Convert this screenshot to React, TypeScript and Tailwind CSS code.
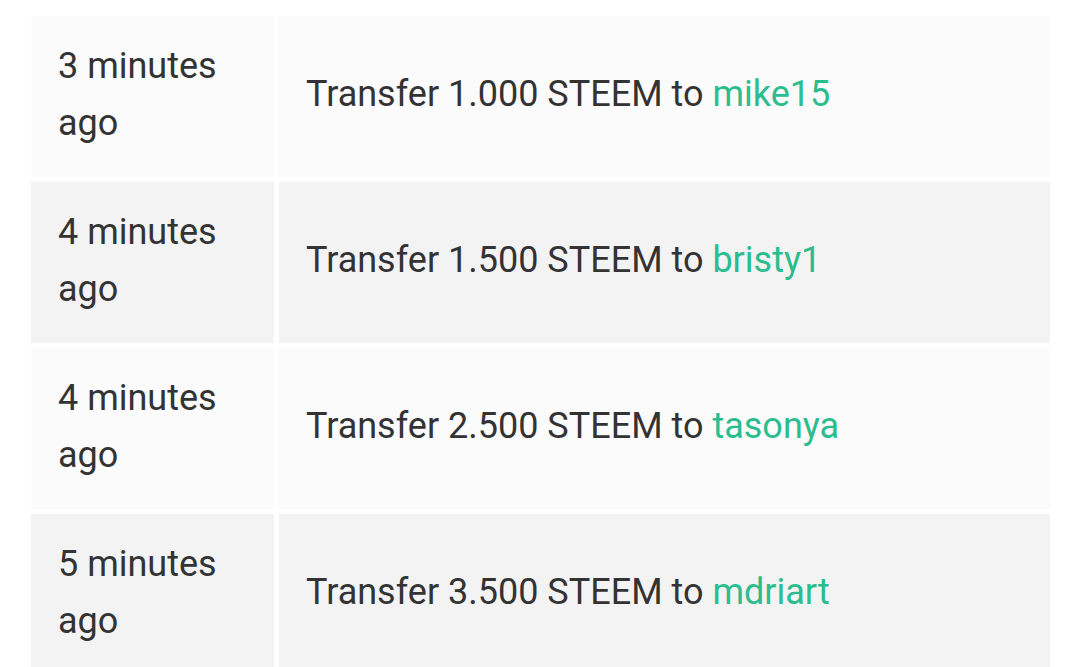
const transfers = [
  { time: "3 minutes ago", amount: "1.000", to: "mike15" },
  { time: "4 minutes ago", amount: "1.500", to: "bristy1" },
  { time: "4 minutes ago", amount: "2.500", to: "tasonya" },
  { time: "5 minutes ago", amount: "3.500", to: "mdriart" },
];

export default function App() {
  return (
    <div className="min-h-screen bg-white pt-4 pl-[31px] font-['Roboto',sans-serif] text-[36px] leading-[57px] text-[#333]">
      <div className="flex w-[1019px] flex-col gap-[5px]">
        {transfers.map((row, index) => {
          const bg = index % 2 === 0 ? "bg-[#fbfbfb]" : "bg-[#f3f3f3]";
          return (
            <div key={`${row.to}-${index}`} className="flex h-[161px] gap-[5px]">
              <div className={`flex w-[243px] shrink-0 items-center px-[27px] pb-[4px] ${bg}`}>
                <p className="w-[170px]">{row.time}</p>
              </div>
              <div className={`flex flex-1 items-center px-[27px] pb-[5px] ${bg}`}>
                <p>
                  Transfer {row.amount} STEEM to{" "}
                  <span className="text-[#2bbd8d]">{row.to}</span>
                </p>
              </div>
            </div>
          );
        })}
      </div>
    </div>
  );
}
